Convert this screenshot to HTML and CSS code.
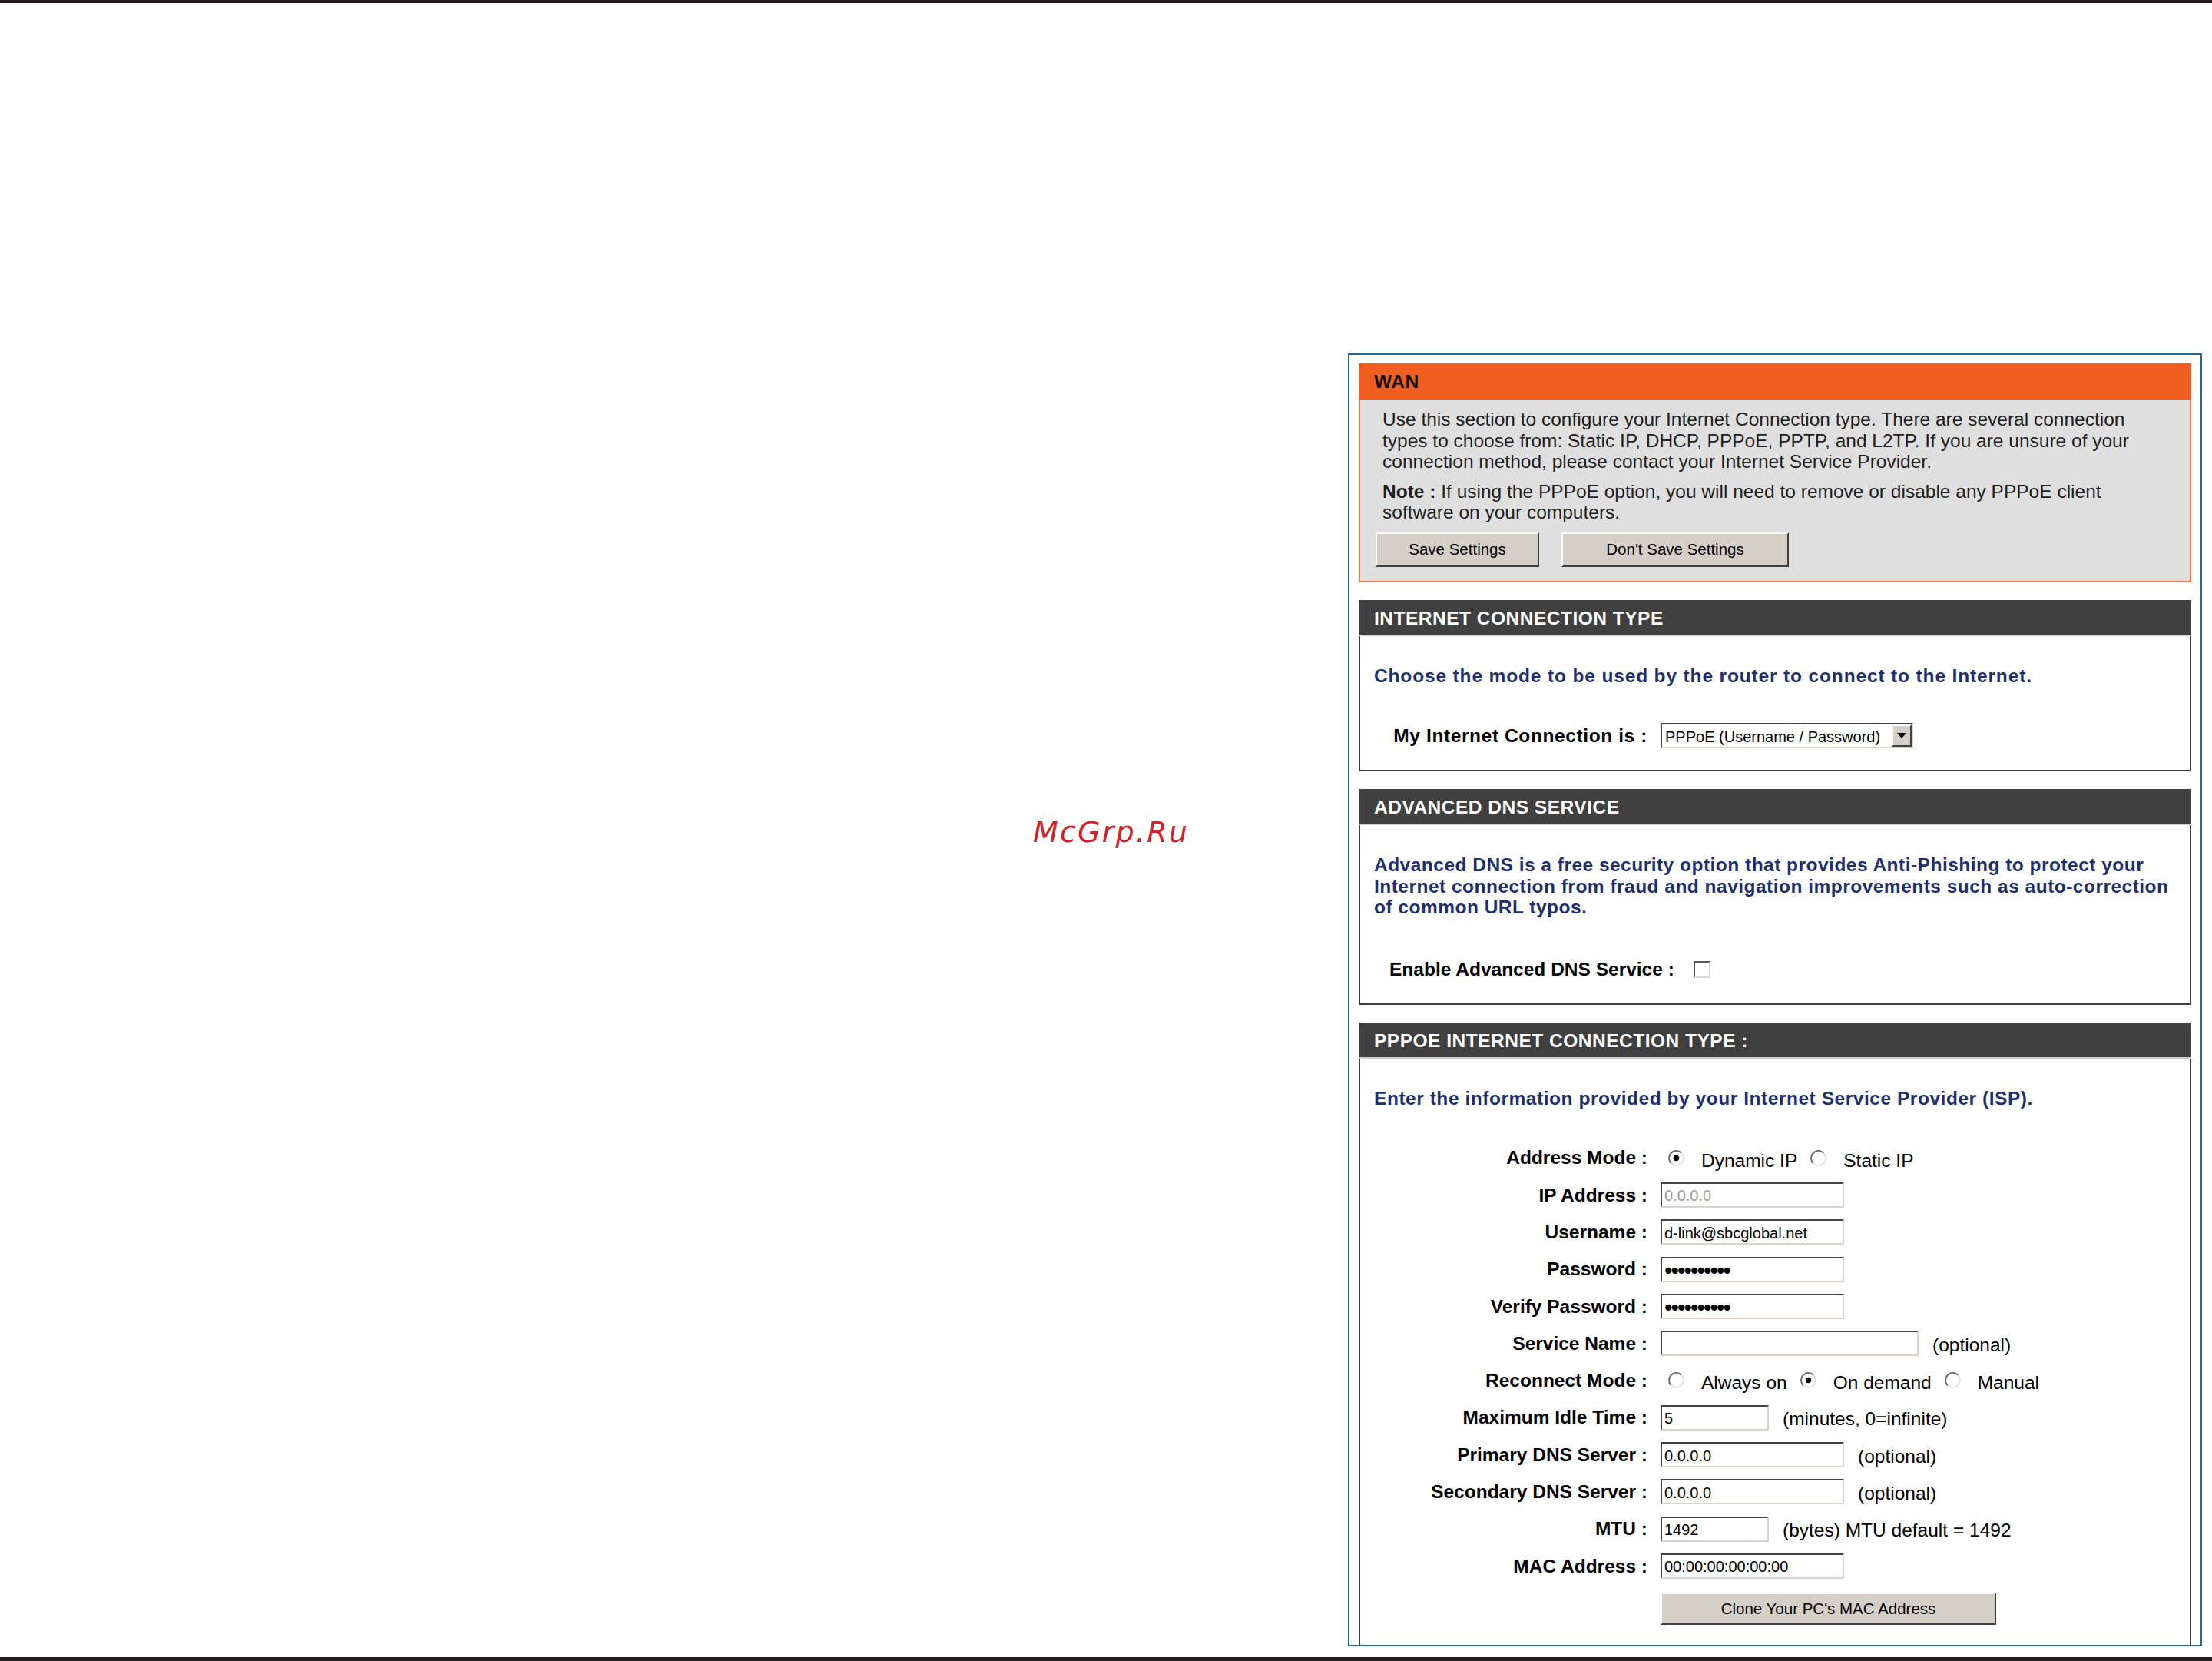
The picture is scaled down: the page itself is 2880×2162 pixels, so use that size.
FILE: index.html
```html
<!DOCTYPE html>
<html lang="en">
<head>
<meta charset="utf-8">
<title>WAN</title>
<link rel="stylesheet" href="styles.css">
</head>
<body>
<div class="page">
  <div class="rule-top"></div>
  <div class="watermark">McGrp.Ru</div>
  <div class="frame-row">
    <div class="frame">

      <section class="box">
        <h2 class="box-head head-orange">WAN</h2>
        <div class="box-body body-wan">
          <p class="intro">Use this section to configure your Internet Connection type. There are several connection<br>types to choose from: Static IP, DHCP, PPPoE, PPTP, and L2TP. If you are unsure of your<br>connection method, please contact your Internet Service Provider.</p>
          <p class="intro note"><b>Note :</b> If using the PPPoE option, you will need to remove or disable any PPPoE client<br>software on your computers.</p>
          <div class="btn-row">
            <button class="btn btn-save" type="button">Save Settings</button>
            <button class="btn btn-dont" type="button">Don't Save Settings</button>
          </div>
        </div>
      </section>

      <section class="box">
        <h2 class="box-head head-dark">INTERNET CONNECTION TYPE</h2>
        <div class="box-body body-dark body-ict">
          <p class="lead lead-ict">Choose the mode to be used by the router to connect to the Internet.</p>
          <div class="form-grid grid-single">
            <label class="lbl lbl-wide" for="conn">My Internet Connection is :</label>
            <div class="ctl">
              <span class="select">
                <select id="conn"><option>PPPoE (Username / Password)</option></select>
                <span class="select-arrow"><svg width="12" height="7" viewBox="0 0 12 7"><path d="M0 0H12L6 7Z" fill="#000"/></svg></span>
              </span>
            </div>
          </div>
        </div>
      </section>

      <section class="box">
        <h2 class="box-head head-dark">ADVANCED DNS SERVICE</h2>
        <div class="box-body body-dark body-dns">
          <p class="lead lead-dns">Advanced DNS is a free security option that provides Anti-Phishing to protect your<br>Internet connection from fraud and navigation improvements such as auto-correction<br>of common URL typos.</p>
          <div class="enable-row">
            <label class="lbl" for="adns">Enable Advanced DNS Service :</label>
            <input class="check" type="checkbox" id="adns">
          </div>
        </div>
      </section>

      <section class="box box-last">
        <h2 class="box-head head-dark">PPPOE INTERNET CONNECTION TYPE :</h2>
        <div class="box-body body-dark body-pppoe">
          <p class="lead lead-pppoe">Enter the information provided by your Internet Service Provider (ISP).</p>
          <div class="form-grid grid-rows">
            <span class="lbl">Address Mode :</span>
            <div class="ctl radios">
              <label class="opt"><input class="radio" type="radio" name="am" checked><span>Dynamic IP</span></label>
              <label class="opt"><input class="radio" type="radio" name="am"><span>Static IP</span></label>
            </div>

            <label class="lbl" for="ip">IP Address :</label>
            <div class="ctl"><input class="txt" id="ip" type="text" value="0.0.0.0" disabled></div>

            <label class="lbl" for="user">Username :</label>
            <div class="ctl"><input class="txt" id="user" type="text" value="d-link@sbcglobal.net"></div>

            <label class="lbl" for="pw">Password :</label>
            <div class="ctl"><input class="txt pw" id="pw" type="password" value="xxxxxxxxxx"></div>

            <label class="lbl" for="pw2">Verify Password :</label>
            <div class="ctl"><input class="txt pw" id="pw2" type="password" value="xxxxxxxxxx"></div>

            <label class="lbl" for="svc">Service Name :</label>
            <div class="ctl"><input class="txt w-wide" id="svc" type="text" value=""><span class="hint">(optional)</span></div>

            <span class="lbl">Reconnect Mode :</span>
            <div class="ctl radios">
              <label class="opt"><input class="radio" type="radio" name="rm"><span>Always on</span></label>
              <label class="opt"><input class="radio" type="radio" name="rm" checked><span>On demand</span></label>
              <label class="opt"><input class="radio" type="radio" name="rm"><span>Manual</span></label>
            </div>

            <label class="lbl" for="idle">Maximum Idle Time :</label>
            <div class="ctl"><input class="txt w-short" id="idle" type="text" value="5"><span class="hint">(minutes, 0=infinite)</span></div>

            <label class="lbl" for="dns1">Primary DNS Server :</label>
            <div class="ctl"><input class="txt" id="dns1" type="text" value="0.0.0.0"><span class="hint">(optional)</span></div>

            <label class="lbl" for="dns2">Secondary DNS Server :</label>
            <div class="ctl"><input class="txt" id="dns2" type="text" value="0.0.0.0"><span class="hint">(optional)</span></div>

            <label class="lbl" for="mtu">MTU :</label>
            <div class="ctl"><input class="txt w-short" id="mtu" type="text" value="1492"><span class="hint">(bytes) MTU default = 1492</span></div>

            <label class="lbl" for="mac">MAC Address :</label>
            <div class="ctl"><input class="txt" id="mac" type="text" value="00:00:00:00:00:00"></div>
          </div>
          <button class="btn btn-clone" type="button">Clone Your PC's MAC Address</button>
        </div>
      </section>

    </div>
  </div>
  <div class="rule-bottom"></div>
</div>
</body>
</html>
```

FILE: styles.css
```css
* { box-sizing: border-box; }

html, body {
  margin: 0;
  padding: 0;
  background: #fff;
}

body {
  font-family: "Liberation Sans", Arial, sans-serif;
  font-size: 24.5px;
  color: #000;
}

.page {
  position: relative;
  width: 2880px;
  height: 2162px;
  display: flex;
  flex-direction: column;
  overflow: hidden;
}

.rule-top {
  flex: none;
  height: 4px;
  background: #231f20;
}

.rule-bottom {
  flex: none;
  margin-top: auto;
  height: 5px;
  background: #231f20;
}

.watermark {
  position: absolute;
  left: 1345px;
  top: 1064px;
  font-family: "DejaVu Sans", sans-serif;
  font-style: italic;
  font-size: 38px;
  line-height: 38px;
  letter-spacing: 2.2px;
  color: #d42027;
}

.frame-row {
  display: flex;
  justify-content: flex-end;
  padding-right: 13px;
  margin-top: 456px;
}

.frame {
  width: 1112px;
  border: 2px solid #1c6aa1;
  padding: 11px 12px 0;
  display: flex;
  flex-direction: column;
  gap: 23px;
}

.box {
  display: flex;
  flex-direction: column;
}

.box-head {
  margin: 0;
  height: 47px;
  line-height: 48px;
  padding-left: 20px;
  font-size: 24.5px;
  font-weight: bold;
  letter-spacing: 0.5px;
}

.head-orange {
  background: #f15d1f;
  color: #111;
}

.head-dark {
  background: #404040;
  color: #fff;
  border-bottom: 2px solid #cfcfcf;
  line-height: 47px;
}

.box-body p { margin: 0; }

.body-wan {
  background: #dfdfdf;
  border: 2px solid #f2773f;
  border-top: none;
  padding: 12px 20px 18px;
  color: #1e1e1e;
}

.intro {
  line-height: 27.5px;
  padding-left: 9px;
  white-space: nowrap;
}

.intro.note { margin-top: 11px; }

.btn-row {
  display: flex;
  gap: 29px;
  margin-top: 12px;
}

.btn {
  font-family: "Liberation Sans", Arial, sans-serif;
  font-size: 20.5px;
  color: #000;
  background: #d4d0c8;
  border: 2px solid;
  border-color: #fafafa #404040 #404040 #fafafa;
  padding: 0;
  height: 45px;
}

.btn-save { width: 213px; }
.btn-dont { width: 296px; }

.btn-clone {
  width: 437px;
  height: 42px;
  margin-top: 10px;
  margin-left: 373px;
}

.body-dark {
  background: #fff;
  border: 2px solid #404040;
  border-top: none;
  padding: 38px 18px 28px;
}

.lead {
  color: #1f2f6e;
  font-weight: bold;
  line-height: 27.5px;
  letter-spacing: 0.55px;
  white-space: nowrap;
}

.lead-ict { margin-bottom: 48px !important; letter-spacing: 0.85px; }
.lead-dns { margin-bottom: 53.5px !important; letter-spacing: 0.48px; }
.lead-pppoe { margin-bottom: 39.5px !important; letter-spacing: 0.54px; }

.body-dns { padding-bottom: 30px; }

.box-last { flex: 1; }

.body-pppoe {
  flex: 1;
  border-bottom: none;
  padding-bottom: 26px;
}

.form-grid {
  display: grid;
  grid-template-columns: 356px 1fr;
  column-gap: 17px;
  align-items: center;
}

.grid-single { grid-auto-rows: 33px; }
.grid-rows { grid-auto-rows: 48.3px; }

.lbl {
  font-weight: bold;
  text-align: right;
  white-space: nowrap;
  line-height: 27.5px;
}

.lbl-wide { letter-spacing: 0.6px; }

.ctl {
  display: flex;
  align-items: center;
  gap: 18px;
  white-space: nowrap;
}

.hint { padding-top: 4px; }

.txt {
  width: 239px;
  height: 33px;
  border: 2px solid;
  border-color: #444 #d8d4cc #d8d4cc #444;
  padding: 3px 3px 0;
  margin: 0;
  background: #fff;
  color: #000;
  font-family: "Liberation Sans", Arial, sans-serif;
  font-size: 20px;
  outline: none;
}

.txt:disabled {
  background: #fff;
  color: #9b9b9b;
}

.txt.pw {
  font-size: 30px;
  letter-spacing: -2px;
  padding-top: 4px;
}

.txt.w-wide { width: 336px; }
.txt.w-short { width: 141px; }

.select {
  display: inline-flex;
  width: 329px;
  height: 33px;
  border: 2px solid;
  border-color: #444 #d8d4cc #d8d4cc #444;
  background: #fff;
}

.select select {
  -webkit-appearance: none;
  appearance: none;
  flex: 1;
  min-width: 0;
  border: 0;
  margin: 0;
  padding: 2px 4px 0;
  background: transparent;
  color: #000;
  font-family: "Liberation Sans", Arial, sans-serif;
  font-size: 20px;
  outline: none;
}

.select-arrow {
  flex: none;
  width: 26px;
  background: #d4d0c8;
  border: 2px solid;
  border-color: #fafafa #404040 #404040 #fafafa;
  display: flex;
  align-items: center;
  justify-content: center;
}

.radios {
  gap: 17px;
  padding-left: 10px;
}

.opt {
  display: inline-flex;
  align-items: center;
  gap: 22px;
}

.opt span { padding-top: 7px; }

.radio {
  -webkit-appearance: none;
  appearance: none;
  width: 21px;
  height: 21px;
  margin: 0;
  border-radius: 50%;
  border: 2px solid;
  border-color: #6a6a6a #e4e4e4 #e4e4e4 #6a6a6a;
  background: #fff;
}

.radio:checked {
  background: radial-gradient(circle, #000 0 3.5px, #fff 4.2px);
}

.enable-row {
  display: flex;
  align-items: center;
  gap: 25px;
  padding-left: 20px;
  height: 28px;
}

.check {
  -webkit-appearance: none;
  appearance: none;
  width: 22px;
  height: 22px;
  margin: 0;
  border: 2px solid;
  border-color: #555 #dcdcdc #dcdcdc #555;
  background: #fff;
}
```
